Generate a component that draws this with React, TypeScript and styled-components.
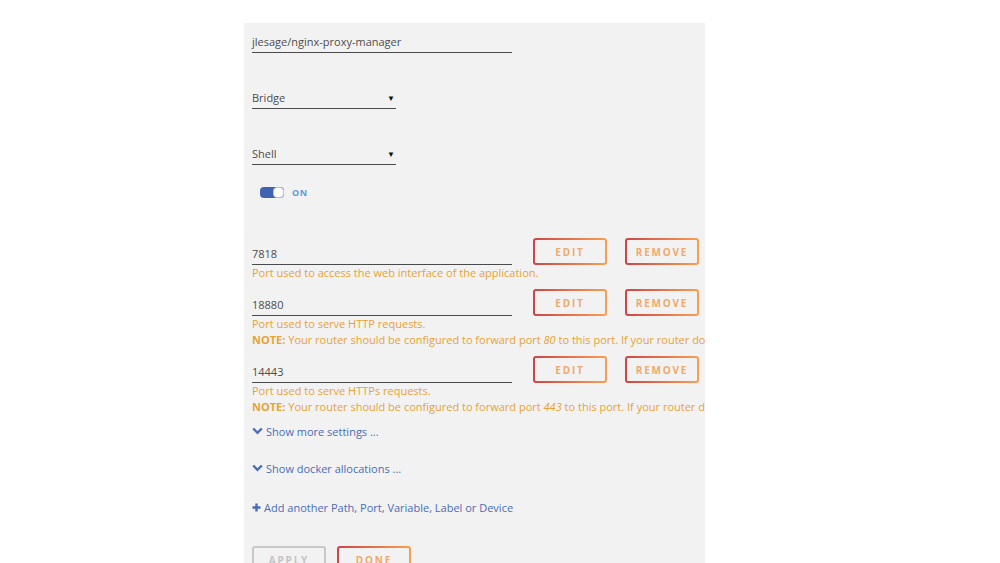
import React from "react";
import styled, { createGlobalStyle } from "styled-components";

const GlobalStyle = createGlobalStyle`
  html, body {
    margin: 0;
    padding: 0;
    background: #fff;
    overflow: hidden;
  }
  body {
    font-family: "Open Sans", "Liberation Sans", sans-serif;
  }
`;

const colors = {
  panel: "#f2f2f2",
  text: "#4d4d4d",
  line: "#4a4a4a",
  orange: "#e8a236",
  blue: "#4a6db5",
  red: "#cf4444",
  amber: "#f7a052",
};

const ports = [
  {
    value: "7818",
    desc: "Port used to access the web interface of the application.",
  },
  {
    value: "18880",
    desc: "Port used to serve HTTP requests.",
    port: "80",
  },
  {
    value: "14443",
    desc: "Port used to serve HTTPs requests.",
    port: "443",
  },
];

const App = () => {
  return (
    <>
      <GlobalStyle />
      <Page>
        <Panel>
          <Field width={260} top={8}>jlesage/nginx-proxy-manager</Field>
          <Field width={144} top={34}>
            Bridge
            <Arrow>▼</Arrow>
          </Field>
          <Field width={144} top={34}>
            Shell
            <Arrow>▼</Arrow>
          </Field>
          <ToggleRow>
            <Toggle>
              <Knob />
            </Toggle>
            <ToggleLabel>ON</ToggleLabel>
          </ToggleRow>

          <Ports>
            {ports.map((p) => (
              <PortBlock key={p.value}>
                <PortRow>
                  <Field width={260} top={0}>{p.value}</Field>
                  <ActionButton>EDIT</ActionButton>
                  <ActionButton>REMOVE</ActionButton>
                </PortRow>
                <Hint>{p.desc}</Hint>
                {p.port && (
                  <Hint>
                    <b>NOTE:</b> Your router should be configured to forward port{" "}
                    <i>{p.port}</i> to this port. If your router doesn't support
                    UPnP, you'll need to forward it manually.
                  </Hint>
                )}
              </PortBlock>
            ))}
          </Ports>

          <LinkLine top={8}>
            <Chevron />
            Show more settings ...
          </LinkLine>
          <LinkLine top={21}>
            <Chevron />
            Show docker allocations ...
          </LinkLine>
          <LinkLine top={23}>
            <Plus />
            Add another Path, Port, Variable, Label or Device
          </LinkLine>

          <Footer>
            <ActionButton disabled>APPLY</ActionButton>
            <ActionButton>DONE</ActionButton>
          </Footer>
        </Panel>
      </Page>
    </>
  );
};

export default App;

const Chevron = () => (
  <svg width="11" height="8" viewBox="0 0 11 8">
    <path d="M1.2 1.5 L5.5 5.8 L9.8 1.5" fill="none" stroke={colors.blue} strokeWidth="2.4" />
  </svg>
);

const Plus = () => (
  <svg width="9" height="9" viewBox="0 0 9 9">
    <path d="M4.5 0.5 V8.5 M0.5 4.5 H8.5" stroke={colors.blue} strokeWidth="2.4" />
  </svg>
);

const Page = styled.div`
  height: 563px;
  padding-top: 23px;
  box-sizing: border-box;
  overflow: hidden;
`;

const Panel = styled.div`
  margin-left: 244px;
  width: 461px;
  min-height: 600px;
  background: ${colors.panel};
  padding-left: 8px;
  box-sizing: border-box;
  overflow: hidden;
  display: flex;
  flex-direction: column;
  align-items: flex-start;
`;

const Field = styled.div<{ width: number; top: number }>`
  width: ${({ width }) => width}px;
  height: 22px;
  margin-top: ${({ top }) => top}px;
  flex-shrink: 0;
  border-bottom: 1px solid ${colors.line};
  box-sizing: border-box;
  display: flex;
  align-items: center;
  justify-content: space-between;
  font-size: 11px;
  color: ${colors.text};
`;

const Arrow = styled.span`
  font-size: 8px;
  color: #111;
  padding-right: 1px;
`;

const ToggleRow = styled.div`
  margin-top: 22px;
  margin-left: 8px;
  display: flex;
  align-items: center;
  gap: 8px;
  height: 11px;
`;

const Toggle = styled.div`
  position: relative;
  width: 24px;
  height: 11px;
  border-radius: 4px;
  background: #3f63b3;
`;

const Knob = styled.div`
  position: absolute;
  right: 0;
  top: 0;
  width: 11px;
  height: 11px;
  border-radius: 4px;
  background: #fff;
  box-sizing: border-box;
  border: 1px solid #b8c3d8;
`;

const ToggleLabel = styled.span`
  font-size: 9px;
  font-weight: 700;
  color: #5b9bd8;
  letter-spacing: 0.5px;
`;

const Ports = styled.div`
  margin-top: 40px;
  width: 100%;
  display: flex;
  flex-direction: column;
  gap: 8px;
`;

const PortBlock = styled.div`
  display: flex;
  flex-direction: column;
`;

const PortRow = styled.div`
  display: flex;
  align-items: flex-end;
  gap: 18px;
  height: 27px;
  & > button:first-of-type {
    margin-left: 3px;
  }
`;

const ActionButton = styled.button`
  width: 74px;
  height: 27px;
  flex-shrink: 0;
  padding: 0;
  font-family: inherit;
  font-size: 10px;
  font-weight: 700;
  letter-spacing: 1.8px;
  color: #eeaa6c;
  border: 2px solid transparent;
  border-radius: 3px;
  background:
    linear-gradient(${colors.panel}, ${colors.panel}) padding-box,
    linear-gradient(90deg, ${colors.red}, ${colors.amber}) border-box;
  &:disabled {
    color: #c4c4c4;
    background:
      linear-gradient(${colors.panel}, ${colors.panel}) padding-box,
      linear-gradient(#c8c8c8, #c8c8c8) border-box;
  }
`;

const Hint = styled.div`
  font-size: 11px;
  line-height: 16px;
  color: ${colors.orange};
  white-space: nowrap;
  b {
    font-weight: 700;
  }
`;

const LinkLine = styled.div<{ top: number }>`
  margin-top: ${({ top }) => top}px;
  display: flex;
  align-items: center;
  gap: 3px;
  height: 16px;
  font-size: 11px;
  color: ${colors.blue};
`;

const Footer = styled.div`
  margin-top: 31px;
  display: flex;
  gap: 11px;
`;
